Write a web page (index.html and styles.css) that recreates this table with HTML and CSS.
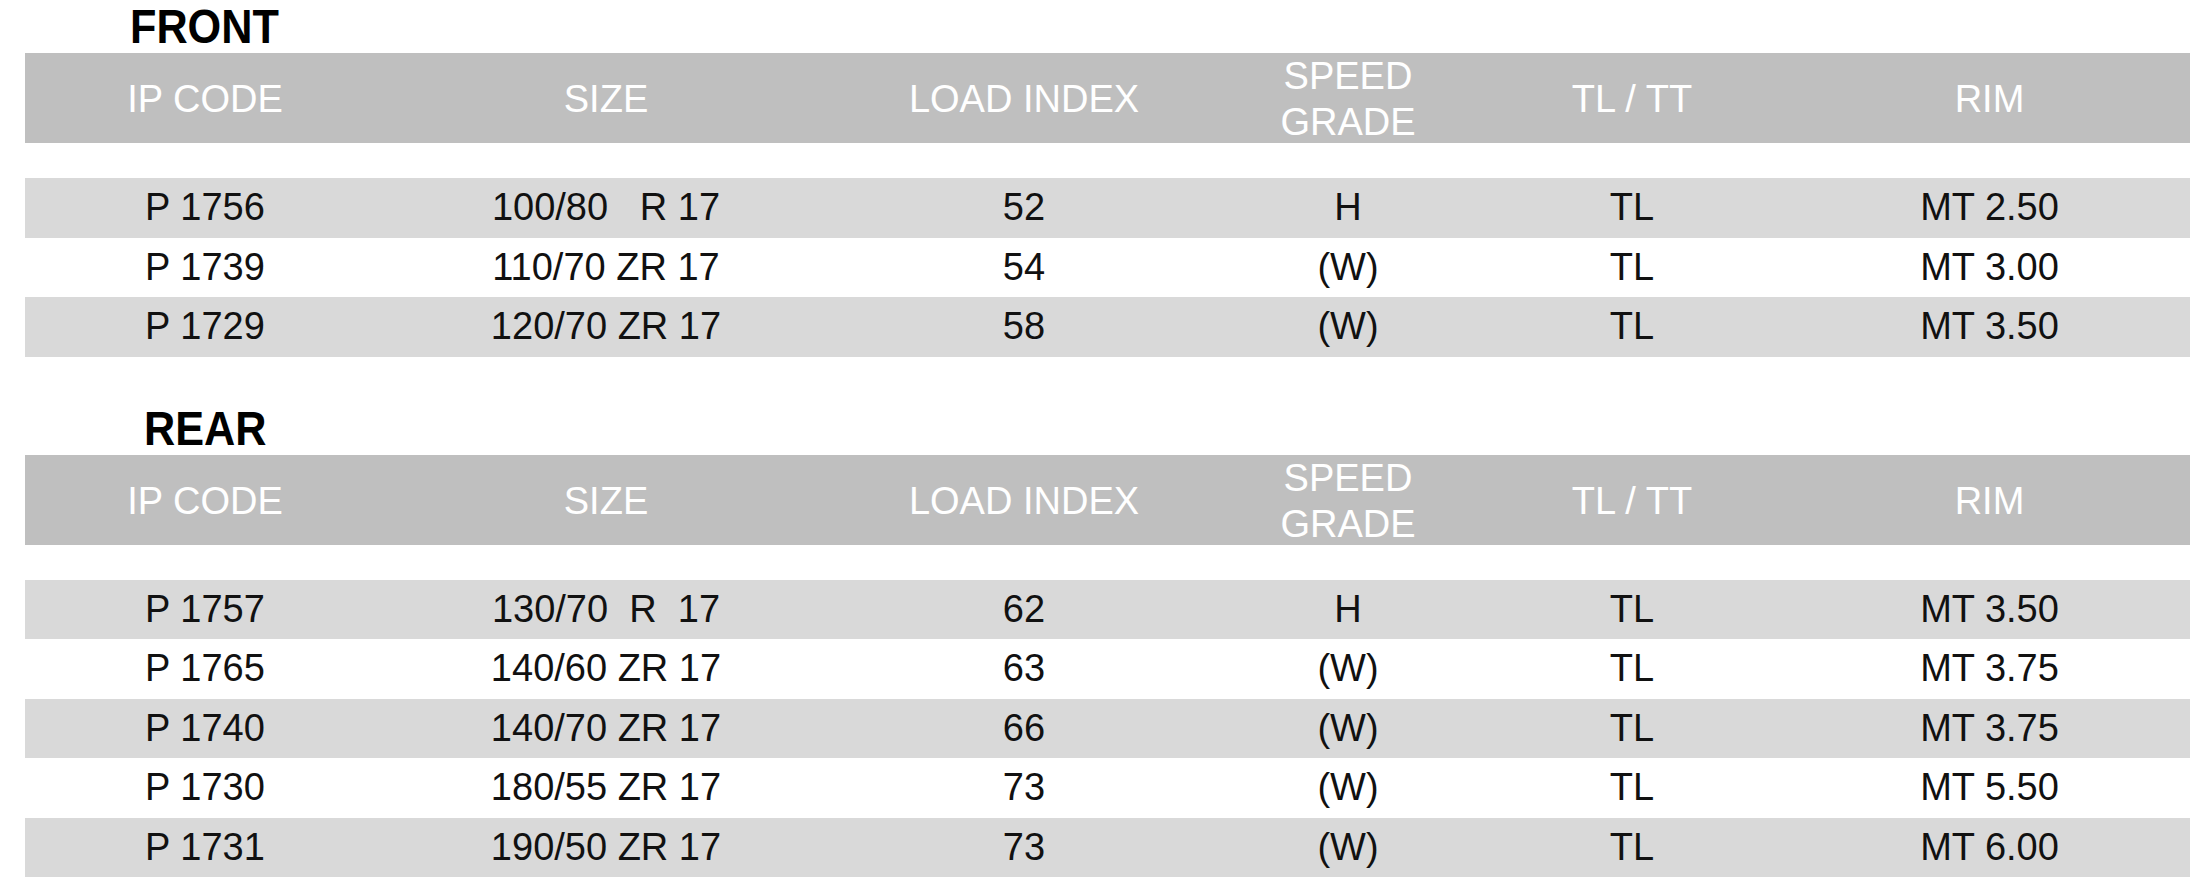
FILE: index.html
```html
<!DOCTYPE html>
<html>
<head>
<meta charset="utf-8">
<link rel="stylesheet" href="styles.css">
</head>
<body>
<div class="page">
  <section class="group">
    <h2 class="title title-front"><span>FRONT</span></h2>
    <div class="head">
      <div class="cell">IP CODE</div>
      <div class="cell">SIZE</div>
      <div class="cell">LOAD INDEX</div>
      <div class="cell two">SPEED<br>GRADE</div>
      <div class="cell">TL / TT</div>
      <div class="cell">RIM</div>
    </div>
    <div class="rows">
      <div class="row"><div class="cell">P 1756</div><div class="cell pre">100/80   R 17</div><div class="cell">52</div><div class="cell">H</div><div class="cell">TL</div><div class="cell">MT 2.50</div></div>
      <div class="row"><div class="cell">P 1739</div><div class="cell pre">110/70 ZR 17</div><div class="cell">54</div><div class="cell">(W)</div><div class="cell">TL</div><div class="cell">MT 3.00</div></div>
      <div class="row"><div class="cell">P 1729</div><div class="cell pre">120/70 ZR 17</div><div class="cell">58</div><div class="cell">(W)</div><div class="cell">TL</div><div class="cell">MT 3.50</div></div>
    </div>
  </section>
  <section class="group group-rear">
    <h2 class="title title-rear"><span>REAR</span></h2>
    <div class="head">
      <div class="cell">IP CODE</div>
      <div class="cell">SIZE</div>
      <div class="cell">LOAD INDEX</div>
      <div class="cell two">SPEED<br>GRADE</div>
      <div class="cell">TL / TT</div>
      <div class="cell">RIM</div>
    </div>
    <div class="rows">
      <div class="row"><div class="cell">P 1757</div><div class="cell pre">130/70  R  17</div><div class="cell">62</div><div class="cell">H</div><div class="cell">TL</div><div class="cell">MT 3.50</div></div>
      <div class="row"><div class="cell">P 1765</div><div class="cell pre">140/60 ZR 17</div><div class="cell">63</div><div class="cell">(W)</div><div class="cell">TL</div><div class="cell">MT 3.75</div></div>
      <div class="row"><div class="cell">P 1740</div><div class="cell pre">140/70 ZR 17</div><div class="cell">66</div><div class="cell">(W)</div><div class="cell">TL</div><div class="cell">MT 3.75</div></div>
      <div class="row"><div class="cell">P 1730</div><div class="cell pre">180/55 ZR 17</div><div class="cell">73</div><div class="cell">(W)</div><div class="cell">TL</div><div class="cell">MT 5.50</div></div>
      <div class="row"><div class="cell">P 1731</div><div class="cell pre">190/50 ZR 17</div><div class="cell">73</div><div class="cell">(W)</div><div class="cell">TL</div><div class="cell">MT 6.00</div></div>
    </div>
  </section>
</div>
</body>
</html>
```
FILE: styles.css
```css
html, body {
  margin: 0;
  padding: 0;
  background: #ffffff;
}

body {
  font-family: "Liberation Sans", Arial, sans-serif;
  color: #111111;
  width: 2211px;
  height: 884px;
  overflow: hidden;
}

.page {
  padding-left: 25px;
  width: 2165px;
}

.group-rear {
  margin-top: 45px;
}

.title {
  margin: 0;
  height: 53px;
  line-height: 54px;
  font-size: 48px;
  font-weight: bold;
  color: #000000;
}

.title span {
  display: inline-block;
  transform: scaleX(0.9);
  transform-origin: left center;
}

.title-front {
  padding-left: 105px;
}

.title-rear {
  padding-left: 119px;
}

.head,
.row {
  display: grid;
  grid-template-columns: 360px 442px 394px 254px 314px 401px;
  align-items: center;
}

.head {
  height: 90px;
  background: #bfbfbf;
  color: #ffffff;
  font-size: 38px;
  margin-bottom: 35px;
}

.head .cell {
  text-align: center;
  line-height: 46px;
}

.row {
  height: 59.5px;
  font-size: 38px;
  color: #111111;
}

.row:nth-child(odd) {
  background: #d9d9d9;
}

.row .cell {
  text-align: center;
  line-height: 59.5px;
}

.pre {
  white-space: pre;
}
```
